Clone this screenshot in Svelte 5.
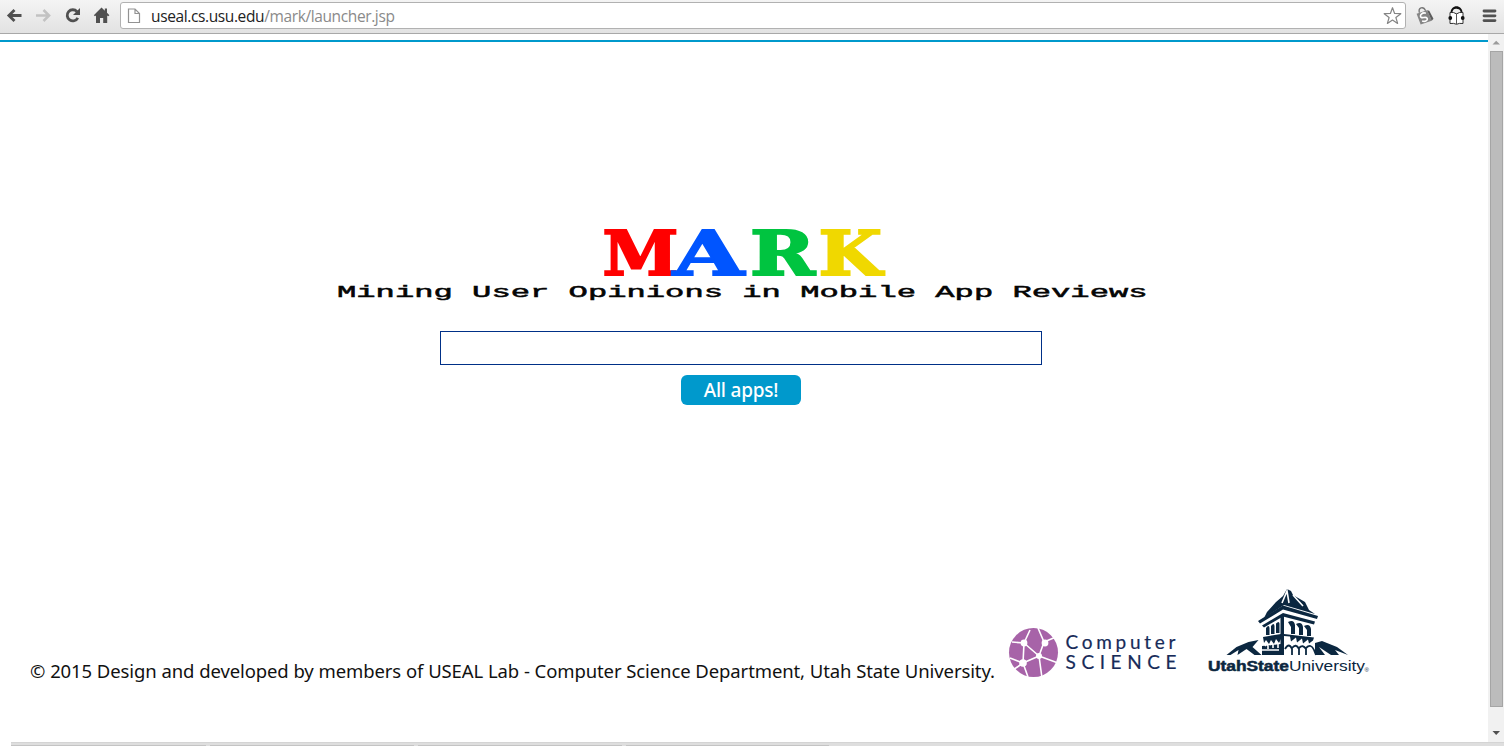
<script>
  const tagline = 'Mining User Opinions in Mobile App Reviews';
  const letters = [
    { c: 'M', color: '#ff0000', x: -1.5, w: 76 },
    { c: 'A', color: '#0055ff', x: 69, w: 71 },
    { c: 'R', color: '#00c440', x: 146, w: 65 },
    { c: 'K', color: '#f0d800', x: 214.5, w: 63.5 }
  ];
  const tabs = [195, 204, 204, 203];
</script>

<div class="window">
  <header class="toolbar">
    <nav>
      <svg width="112" height="33" viewBox="0 0 112 33" fill="none">
        <path d="M21.500 15.500H9.500M14.500 10l-5.600 5.500 5.600 5.500" stroke="#505050" stroke-width="2.8" />
        <path d="M36 15.500h12M43.500 10l5.600 5.500-5.600 5.500" stroke="#c2c2c2" stroke-width="2.5" />
        <path d="M77 11.600a5.600 5.600 0 1 0 .8 6.300" stroke="#505050" stroke-width="2.800" />
        <path d="M80 8v7h-7z" fill="#505050" />
        <path d="M101.500 7.500 93.800 15.200l1.200 1.100 1-.9V23h4v-5h3.200v5h4v-7.600l1 .9 1.200-1.100-2.400-2.400V8.500h-2.200v2.300z" fill="#505050" />
      </svg>
    </nav>
    <div class="address">
      <svg width="14" height="16" viewBox="0 0 14 16" fill="#fff" stroke="#929292" stroke-width="1.200">
        <path d="M1.500 1h6.500l4.500 4.500v9h-11zM8 1v4.500h4.500" />
      </svg>
      <span class="url">useal.cs.usu.edu<i>/mark/launcher.jsp</i></span>
      <svg width="20" height="20" viewBox="0 0 20 20" fill="#fff" stroke="#858585" stroke-width="1.200" stroke-linejoin="round">
        <path d="m10.500 1.700 2.100 5.800 6.200.2-4.900 3.800 1.700 5.900-5.100-3.400-5.100 3.400 1.700-5.900-4.900-3.800 6.200-.2z" />
      </svg>
    </div>
    <svg class="extensions" width="98" height="33" viewBox="0 0 98 33">
      <g transform="translate(18 15.500) rotate(-18)">
        <path d="M-6.500-4h11l1.200 11.500H-6z" fill="#858585" />
        <path d="M4.500-4l2 1 1.500 9-2.300 1.500z" fill="#5d5d5d" />
        <path d="M-3.500-4c0-5.500 6-5.500 6.500 0" fill="none" stroke="#777" stroke-width="1.300" />
        <path d="M2.500-1.600C-.5-4-4.700-1.400-3.300.8c1 1.500 4.600.6 5.300 2.400.9 2.400-2.700 3.700-5.500 1.500" fill="none" stroke="#fff" stroke-width="1.600" />
      </g>
      <g transform="translate(-.5 -.5)">
        <path d="M45 13.500c0-9 12-9 12 0z" fill="#111" />
        <path d="M47 12c1-3 3-3 5-2.500 2 .3 2.500 1 3 2.500v2h-8z" fill="#eee" />
        <path d="M44.500 13q4-.6 6.500 1.400 2.500-2 6.500-1.400v11q-4-.6-6.500.8-2.500-1.400-6.500-.8z" fill="#fff" stroke="#333" />
        <path d="M51 14v10.500" stroke="#555" />
        <circle cx="44.800" cy="18.500" r="1.900" fill="#111" /><circle cx="57.200" cy="18.500" r="1.900" fill="#111" />
      </g>
      <path d="M78 11h11M78 15.800h11M78 20.600h11" stroke="#515151" stroke-width="2.800" stroke-linecap="round" />
    </svg>
  </header>

  <div class="viewport">
    <main>
      <section class="brand">
        <svg class="mark" width="282" height="48" viewBox="0 0 282 48">
          <text y="46">{#each letters as l}<tspan x={l.x} fill={l.color} stroke={l.color} textLength={l.w} lengthAdjust="spacingAndGlyphs">{l.c}</tspan>{/each}</text>
        </svg>
        <svg class="tagline" width="812" height="26" viewBox="0 0 812 26">
          <text x="0" y="17.500" textLength="810.600" lengthAdjust="spacingAndGlyphs">{tagline}</text>
        </svg>
      </section>
      <input type="text" aria-label="App name" />
      <button>All apps!</button>
      <footer>
        <p>© 2015 Design and developed by members of USEAL Lab - Computer Science Department, Utah State University.</p>
        <svg class="cs" width="172" height="50" viewBox="0 0 172 50">
          <circle cx="24.500" cy="24.500" r="24.500" fill="#a763a8" />
          <g stroke="#fff" stroke-width="1.600" fill="none">
            <path d="M3 14l12 1L21 2M15 15l-1 20L4 42M15 15l15 13 5-14L29 0M35 14l12-5M30 28l19 7M30 28l3 22M30 28L14 35l5 14M14 35L1 30" />
          </g>
          <g fill="#fff"><circle cx="15" cy="15" r="3.400" /><circle cx="36" cy="15" r="3.400" /><circle cx="30" cy="28" r="3" /><circle cx="14" cy="35" r="3.800" /></g>
          <text x="56.500" y="20.500" textLength="110">Computer</text>
          <text x="56.500" y="40.500" textLength="111">SCIENCE</text>
        </svg>
        <svg class="usu" width="164" height="90" viewBox="0 0 164 90">
          <g fill="#0b2740">
            <path d="M79 1l4 2 2 4 12 7 4 8 6 4-31-9-20 13 3-6 9-10 7-6z" />
            <path d="M50 33l25-15.500 35 10.500-1 3-34-9.500-23 14z" />
            <path d="M54 37.500l21-12.500 32 8.500-1 3-31-8-19 11z" />
            <path d="M72.500 28l3.500-1v40h-3.500z" />
            <path d="M58 40q3-4 3.500 0v7H58zM63 38q3-4 3.500 0v8H63zM68 35.500q3-3 3.500 0V45H68z" />
            <path d="M80 34q6-3 7 3v9h-4V39zM88 36q6-3 7 3v8h-4v-7zM96 38q6-3 7 3v7h-4v-6z" />
            <path d="M55 49l18-3v5l-2 4-3-4-2 5-3-4-2 4-3-4-2 3zM76 46l30 3.500-1 3-4 3-1-4-5 4-1-5-5 4-1-5-5 4-1-5-6-.5z" />
            <path d="M54 58l19-2v11H54z" />
            <path d="M18.500 67l10-8 12-5 10-2-6 7 9 8h-7l-8-6-9 6 1-5-8 5zM107 55l7-2 15 6 11 8-13-5 4 5h-8l-12-8 6 8h-10z" />
          </g>
          <path d="M74 15l5-12 2 12M85 7l10 11M54 62h17M57 58q2-3 3 0v3M62 57q2-3 3 0v3M67 56q2-3 3 0v4" fill="none" stroke="#fff" stroke-width="1.600" />
          <path d="M77 61q4-7 7 0v6M84 60q4-5 7 1v6M91 60q4-4 7 1v6M98 60q5-5 8 2l2 5" fill="none" stroke="#0b2740" stroke-width="1.800" />
          <text x="0" y="83" textLength="157" lengthAdjust="spacingAndGlyphs"><tspan font-weight="700" stroke="#0b2740" stroke-width=".5">UtahState</tspan>University</text>
          <text class="reg" x="156.500" y="84">®</text>
        </svg>
      </footer>
    </main>
    <aside class="scroll">
      <svg width="15" height="16" viewBox="0 0 15 16"><path d="M4.500 10.500h7.500L8.200 6.800z" fill="#9b9b9b" /></svg>
      <div class="thumb"></div>
      <svg class="down" width="15" height="16" viewBox="0 0 15 16"><path d="M4.500 6h7.500L8.200 10z" fill="#505050" /></svg>
    </aside>
  </div>
  <div class="taskbar">
    {#each tabs as w}<span style="width:{w}px"></span>{/each}
  </div>
</div>

<style>
  :global(body) { margin: 0; background: #fff; overflow: hidden; }
  svg { display: block; flex: none; }
  .window { width: 1504px; height: 748px; display: flex; flex-direction: column; background: #fff; font-family: "Noto Sans", sans-serif; }
  .toolbar { box-sizing: border-box; height: 34px; flex: none; display: flex; align-items: flex-start; background: linear-gradient(#f4f4f4, #e2e2e2); border-bottom: 1px solid #a8a8a8; }
  nav { width: 120px; }
  .address { box-sizing: border-box; width: 1286px; height: 27px; margin-top: 2px; border: 1px solid #b1b1b1; border-radius: 3px; background: #fff; display: flex; align-items: center; padding: 0 3px 0 6px; }
  .url { flex: 1; margin-left: 10px; font: 15.500px/24px "Open Sans", sans-serif; letter-spacing: -.38px; color: #222; }
  .url i { font-style: normal; color: #8a8a8a; }
  .viewport { height: 708px; flex: none; display: flex; }
  main { box-sizing: border-box; width: 1488px; margin-top: 6px; border-top: 2px solid #0099cc; display: flex; flex-direction: column; align-items: flex-start; }
  .brand { margin: 187px 0 0 337px; }
  .mark { margin-left: 267px; overflow: visible; }
  .mark text { font: bold 61px "DejaVu Serif", serif; stroke-width: 2px; }
  .tagline text { font: 17px "Liberation Mono", monospace; fill: #050505; stroke: #050505; stroke-width: .5px; }
  .tagline { margin-top: 2px; overflow: visible; }
  input { box-sizing: border-box; width: 602px; height: 34px; margin: 26px 0 0 440px; border: 1px solid #003087; background: #fff; padding: 4px; }
  button { width: 120px; height: 30px; margin: 10px 0 0 681px; padding: 0; border: 0; border-radius: 6px; background: #0099cc; color: #fff; font: 500 19px/30px "Noto Sans", sans-serif; letter-spacing: -.2px; }
  footer { display: flex; align-items: flex-start; margin: 183px 0 0 30px; height: 100px; }
  p { width: 979px; margin: 70px 0 0; white-space: nowrap; font-size: 18.500px; line-height: 26px; color: #111; letter-spacing: -.11px; word-spacing: .15px; }
  .cs { margin-top: 40px; overflow: visible; }
  .cs text { font: 19px Lato, sans-serif; fill: #172b59; stroke: #172b59; stroke-width: .2px; }
  .usu { margin-left: 27px; overflow: visible; }
  .usu text { font-family: "Liberation Sans", sans-serif; font-size: 14px; fill: #0b2740; }
  .usu .reg { font-size: 6px; }
  .scroll { width: 16px; height: 708px; background: #f1f1f1; display: flex; flex-direction: column; }
  .thumb { box-sizing: border-box; width: 13px; height: 656px; margin: 1px 0 0 2px; background: #bcbcbc; border: 1px solid #a5a5a5; }
  .down { margin-top: 18px; }
  .taskbar { box-sizing: border-box; height: 4px; margin-left: 11px; background: #dedede; border-top: 1px solid #d4d4d4; display: flex; align-items: flex-end; gap: 4px; }
  .taskbar span { height: 1px; background: #c4c4c4; }
</style>
